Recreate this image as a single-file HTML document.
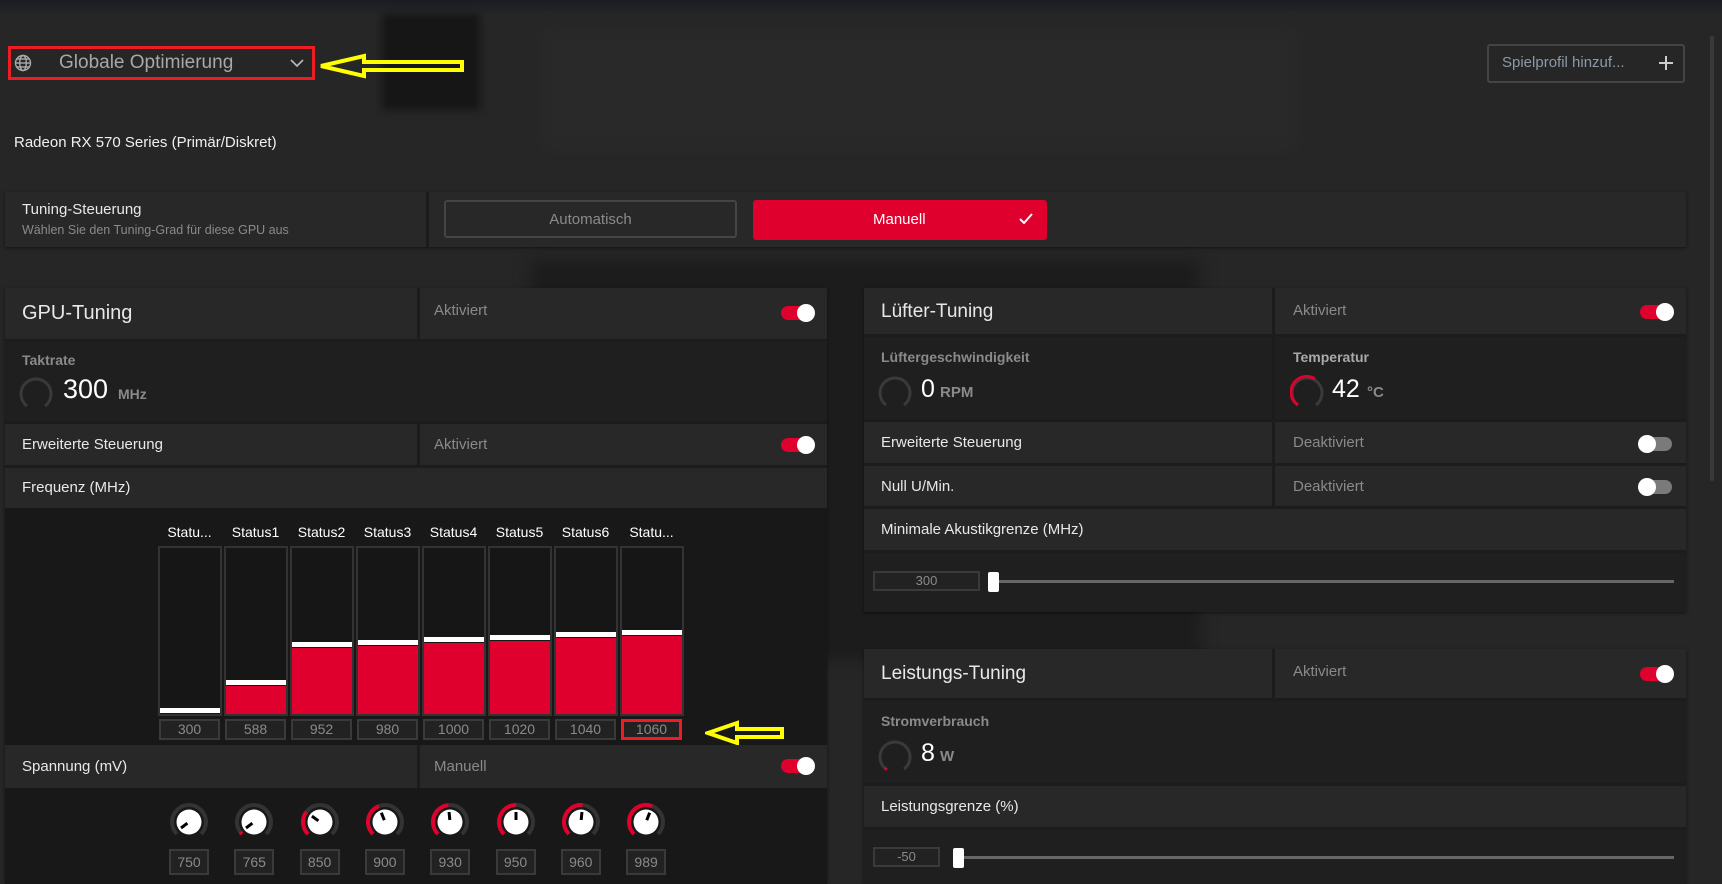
<!DOCTYPE html>
<html><head><meta charset="utf-8"><style>
*{box-sizing:border-box;margin:0;padding:0}
body{width:1722px;height:884px;overflow:hidden;background:#262626;font-family:"Liberation Sans Narrow","Liberation Sans",sans-serif;color:#e8e8e8;position:relative}
.a{position:absolute}
.panel{position:absolute;background:#282828;box-shadow:0 1px 3px rgba(0,0,0,.5)}
.row{position:absolute;left:0;right:0;background:#282828;border-top:3px solid #1c1c1c}
.dark{background:#1f1f1f}
.t{position:absolute;font-size:15px;color:#e8e8e8;white-space:nowrap}
.row .t{margin-top:2px}
.g{color:#8a8a8a}
.tog{position:absolute;width:32px;height:14px;border-radius:7px;background:#e0002d}
.tog:after{content:"";position:absolute;right:-2px;top:-2px;width:18px;height:18px;border-radius:50%;background:#fff}
.tog.off{background:#7a7a7a}
.tog.off:after{left:-2px;right:auto}
.vdiv{position:absolute;top:0;bottom:0;width:3px;background:#1c1c1c}
.box{position:absolute;border:2px solid #3a3a3a;background:#222;color:#8a8a8a;font-size:14px;text-align:center}
</style></head><body>
<div class="a" style="left:0;top:0;width:1722px;height:14px;background:linear-gradient(#1a1c24,#262626)"></div>
<div class="a" style="left:382px;top:14px;width:98px;height:96px;background:#161616;filter:blur(4px)"></div>
<div class="a" style="left:540px;top:30px;width:760px;height:120px;background:#2c2c2c;filter:blur(10px);opacity:.6"></div>
<div class="a" style="left:530px;top:260px;width:670px;height:400px;background:#1c1c1c;filter:blur(8px)"></div>
<div class="a" style="left:1710px;top:36px;width:4px;height:445px;background:#3a3a3a;border-radius:2px"></div>

<div class="a" style="left:8px;top:46px;width:307px;height:34px;border:3px solid #ee1c25"></div>
<svg class="a" style="left:14px;top:54px" width="18" height="18" viewBox="0 0 18 18" fill="none" stroke="#aaa" stroke-width="1.4"><circle cx="9" cy="9" r="7.5"/><ellipse cx="9" cy="9" rx="3.3" ry="7.5"/><line x1="1.5" y1="9" x2="16.5" y2="9"/><line x1="3" y1="5" x2="15" y2="5"/><line x1="3" y1="13" x2="15" y2="13"/></svg>
<div class="t" style="left:59px;top:52px;font-size:19px;color:#a8a8a8">Globale Optimierung</div>
<svg class="a" style="left:290px;top:59px" width="14" height="9" viewBox="0 0 14 9" fill="none" stroke="#bbb" stroke-width="1.6"><path d="M1 1l6 6 6-6"/></svg>
<svg class="a" style="left:318px;top:53px" width="148" height="26" viewBox="0 0 148 26" fill="none" stroke="#ffff00" stroke-width="4"><path d="M3 13 L46 3 L46 9 L144 9 L144 17 L46 17 L46 23 Z"/></svg>

<div class="t" style="left:14px;top:134px;font-size:15px;color:#f0f0f0">Radeon RX 570 Series (Primär/Diskret)</div>

<div class="a" style="left:1487px;top:44px;width:198px;height:39px;border:2px solid #444;border-radius:3px"></div>
<div class="t" style="left:1502px;top:54px;font-size:15px;color:#8d99a6">Spielprofil hinzuf...</div>
<svg class="a" style="left:1659px;top:56px" width="14" height="14" viewBox="0 0 14 14" stroke="#ccc" stroke-width="2"><path d="M7 0v14M0 7h14"/></svg>

<div class="panel" style="left:5px;top:192px;width:1681px;height:55px">
  <div class="vdiv" style="left:421px"></div>
  <div class="t" style="left:17px;top:9px;font-size:15px">Tuning-Steuerung</div>
  <div class="t g" style="left:17px;top:31px;font-size:12.5px">Wählen Sie den Tuning-Grad für diese GPU aus</div>
  <div class="a" style="left:439px;top:8px;width:293px;height:38px;border:2px solid #454545;border-radius:3px"></div>
  <div class="t g" style="left:439px;top:19px;width:293px;text-align:center;font-size:15px">Automatisch</div>
  <div class="a" style="left:748px;top:8px;width:294px;height:40px;background:#e0002d;border-radius:3px"></div>
  <div class="t" style="left:868px;top:19px;font-size:15px;color:#fff">Manuell</div>
  <svg class="a" style="left:1014px;top:21px" width="14" height="11" viewBox="0 0 14 11" fill="none" stroke="#fff" stroke-width="2"><path d="M1 6l4 4 8-9"/></svg>
</div>

<div class="panel" style="left:5px;top:288px;width:822px;height:596px;background:#181818">
  <div class="row" style="top:0;height:51px;border-top:none"><div class="vdiv" style="left:412px"></div>
    <div class="t" style="left:17px;top:12px;font-size:20px">GPU-Tuning</div>
    <div class="t g" style="left:429px;top:12px">Aktiviert</div><div class="tog" style="left:776px;top:18px"></div></div>
  <div class="row dark" style="top:51px;height:82px">
    <div class="t g" style="left:17px;top:8px;font-size:14px;font-weight:bold">Taktrate</div>
    <svg class="a" style="left:14px;top:34px" width="34" height="34"><path d="M8 30 A15 15 0 1 1 26 30" fill="none" stroke="#3a3a3a" stroke-width="3"/></svg>
    <div class="t" style="left:58px;top:30px;font-size:27px;color:#fff">300</div>
    <div class="t g" style="left:113px;top:42px;font-size:14px;font-weight:bold">MHz</div></div>
  <div class="row" style="top:133px;height:44px"><div class="vdiv" style="left:412px"></div>
    <div class="t" style="left:17px;top:10px">Erweiterte Steuerung</div>
    <div class="t g" style="left:429px;top:10px">Aktiviert</div><div class="tog" style="left:776px;top:14px"></div></div>
  <div class="row" style="top:177px;height:43px"><div class="t" style="left:17px;top:9px">Frequenz (MHz)</div></div>
  <div id="bars"></div>
  <div class="row" style="top:457px;height:43px;border-top:none"><div class="vdiv" style="left:412px"></div>
    <div class="t" style="left:17px;top:11px">Spannung (mV)</div>
    <div class="t g" style="left:429px;top:11px">Manuell</div><div class="tog" style="left:776px;top:14px"></div></div>
  <div id="knobs"></div>
</div>

<div class="panel" style="left:864px;top:288px;width:822px;height:324px">
  <div class="row" style="top:0;height:46px;border-top:none"><div class="vdiv" style="left:408px"></div>
    <div class="t" style="left:17px;top:11px;font-size:19px">Lüfter-Tuning</div>
    <div class="t g" style="left:429px;top:12px">Aktiviert</div><div class="tog" style="left:776px;top:17px"></div></div>
  <div class="row dark" style="top:46px;height:85px"><div class="vdiv" style="left:408px"></div>
    <div class="t g" style="left:17px;top:10px;font-size:14px;font-weight:bold">Lüftergeschwindigkeit</div>
    <div class="t" style="left:429px;top:10px;font-size:14px;font-weight:bold;color:#aaa">Temperatur</div>
    <svg class="a" style="left:14px;top:38px" width="34" height="34"><path d="M8 30 A15 15 0 1 1 26 30" fill="none" stroke="#3a3a3a" stroke-width="3"/></svg>
    <div class="t" style="left:57px;top:36px;font-size:25px;color:#fff">0</div>
    <div class="t g" style="left:76px;top:45px;font-size:15px;font-weight:bold">RPM</div>
    <svg class="a" style="left:426px;top:38px" width="34" height="34"><path d="M8 30 A15 15 0 1 1 26 30" fill="none" stroke="#3a3a3a" stroke-width="3"/><path d="M8 30 A15 15 0 0 1 25 4" fill="none" stroke="#e0002d" stroke-width="3"/></svg>
    <div class="t" style="left:468px;top:36px;font-size:25px;color:#fff">42</div>
    <div class="t g" style="left:503px;top:45px;font-size:15px;font-weight:bold">°C</div></div>
  <div class="row" style="top:131px;height:44px"><div class="vdiv" style="left:408px"></div>
    <div class="t" style="left:17px;top:10px">Erweiterte Steuerung</div>
    <div class="t g" style="left:429px;top:10px">Deaktiviert</div><div class="tog off" style="left:776px;top:15px"></div></div>
  <div class="row" style="top:175px;height:43px"><div class="vdiv" style="left:408px"></div>
    <div class="t" style="left:17px;top:10px">Null U/Min.</div>
    <div class="t g" style="left:429px;top:10px">Deaktiviert</div><div class="tog off" style="left:776px;top:14px"></div></div>
  <div class="row" style="top:218px;height:44px"><div class="t" style="left:17px;top:10px">Minimale Akustikgrenze (MHz)</div></div>
  <div class="row dark" style="top:262px;height:62px">
    <div class="box" style="left:9px;top:18px;width:107px;height:20px;font-size:13px;line-height:16px">300</div>
    <div class="a" style="left:130px;top:27px;width:680px;height:3px;background:#666"></div>
    <div class="a" style="left:124px;top:19px;width:11px;height:20px;background:#fff;border-radius:2px"></div></div>
</div>

<div class="panel" style="left:864px;top:649px;width:822px;height:235px">
  <div class="row" style="top:0;height:49px;border-top:none"><div class="vdiv" style="left:408px"></div>
    <div class="t" style="left:17px;top:12px;font-size:19px">Leistungs-Tuning</div>
    <div class="t g" style="left:429px;top:12px">Aktiviert</div><div class="tog" style="left:776px;top:18px"></div></div>
  <div class="row dark" style="top:49px;height:85px">
    <div class="t g" style="left:17px;top:10px;font-size:14px;font-weight:bold">Stromverbrauch</div>
    <svg class="a" style="left:14px;top:38px" width="34" height="34"><path d="M8 30 A15 15 0 1 1 26 30" fill="none" stroke="#3a3a3a" stroke-width="3"/><circle cx="8" cy="30" r="1.5" fill="#e0002d"/></svg>
    <div class="t" style="left:57px;top:36px;font-size:25px;color:#fff">8</div>
    <div class="t g" style="left:76px;top:45px;font-size:15px;font-weight:bold">W</div></div>
  <div class="row" style="top:134px;height:44px"><div class="t" style="left:17px;top:10px">Leistungsgrenze (%)</div></div>
  <div class="row dark" style="top:178px;height:57px">
    <div class="box" style="left:9px;top:17px;width:67px;height:20px;font-size:13px;line-height:16px">-50</div>
    <div class="a" style="left:95px;top:26px;width:715px;height:3px;background:#666"></div>
    <div class="a" style="left:89px;top:18px;width:11px;height:20px;background:#fff;border-radius:2px"></div></div>
</div>

<script>
var labels=["Statu...","Status1","Status2","Status3","Status4","Status5","Status6","Statu..."];
var vals=[300,588,952,980,1000,1020,1040,1060];
var fill=[0,17,39.5,41,42.5,44,45.5,47];
var h='';
for(var i=0;i<8;i++){
 var x=153+i*66;
 h+='<div class="t" style="left:'+(x-5)+'px;top:236px;width:73px;text-align:center;font-size:14px;color:#fff">'+labels[i]+'</div>';
 h+='<div class="a" style="left:'+x+'px;top:258px;width:64px;height:170px;border:2px solid #333;background:#161616"></div>';
 var fh=Math.round(fill[i]*1.66);
 h+='<div class="a" style="left:'+(x+2)+'px;top:'+(426-fh)+'px;width:60px;height:'+fh+'px;background:#e0002d"></div>';
 h+='<div class="a" style="left:'+(x+2)+'px;top:'+(426-fh-6)+'px;width:60px;height:5px;background:#fff"></div>';
 h+='<div class="box" style="left:'+(x+1)+'px;top:431px;width:61px;height:21px;line-height:17px;font-size:14px;'+(i==7?'border:3px solid #ee1c25;line-height:15px;':'')+'">'+vals[i]+'</div>';
}
h+='<svg class="a" style="left:700px;top:432px" width="80" height="26" viewBox="0 0 80 26" fill="none" stroke="#ffff00" stroke-width="4"><path d="M3 13 L32 3 L32 9 L77 9 L77 17 L32 17 L32 23 Z"/></svg>';
document.getElementById('bars').innerHTML=h;
var kv=[750,765,850,900,930,950,960,989];var kf=[0.03,0.03,0.3,0.42,0.48,0.5,0.52,0.58];
var k='';
function pt(cx,cy,r,a){return [cx+r*Math.sin(a),cy-r*Math.cos(a)];}
for(var i=0;i<8;i++){
 var cx=184+i*65.3, cy=534;
 var s=-3*Math.PI/4, e=s+kf[i]*1.5*Math.PI, R=17;
 var p0=pt(20,20,R,s),p1=pt(20,20,R,3*Math.PI/4),pe=pt(20,20,R,e);
 var svg='<svg class="a" style="left:'+(cx-20)+'px;top:'+(cy-20)+'px" width="40" height="40">';
 svg+='<path d="M'+p0+' A'+R+' '+R+' 0 1 1 '+p1+'" fill="none" stroke="#333" stroke-width="4"/>';
 if(i>0) svg+='<path d="M'+p0+' A'+R+' '+R+' 0 '+(kf[i]*270>180?1:0)+' 1 '+pe+'" fill="none" stroke="#e0002d" stroke-width="4"/>';
 svg+='<circle cx="20" cy="20" r="12.5" fill="#fff"/>';
 var n1=pt(20,20,2,e),n2=pt(20,20,10,e);
 svg+='<line x1="'+n1[0]+'" y1="'+n1[1]+'" x2="'+n2[0]+'" y2="'+n2[1]+'" stroke="#000" stroke-width="3"/></svg>';
 k+=svg;
 k+='<div class="box" style="left:'+(cx-20)+'px;top:561px;width:40px;height:26px;line-height:22px;font-size:14px">'+kv[i]+'</div>';
}
document.getElementById('knobs').innerHTML=k;
</script>
</body></html>
